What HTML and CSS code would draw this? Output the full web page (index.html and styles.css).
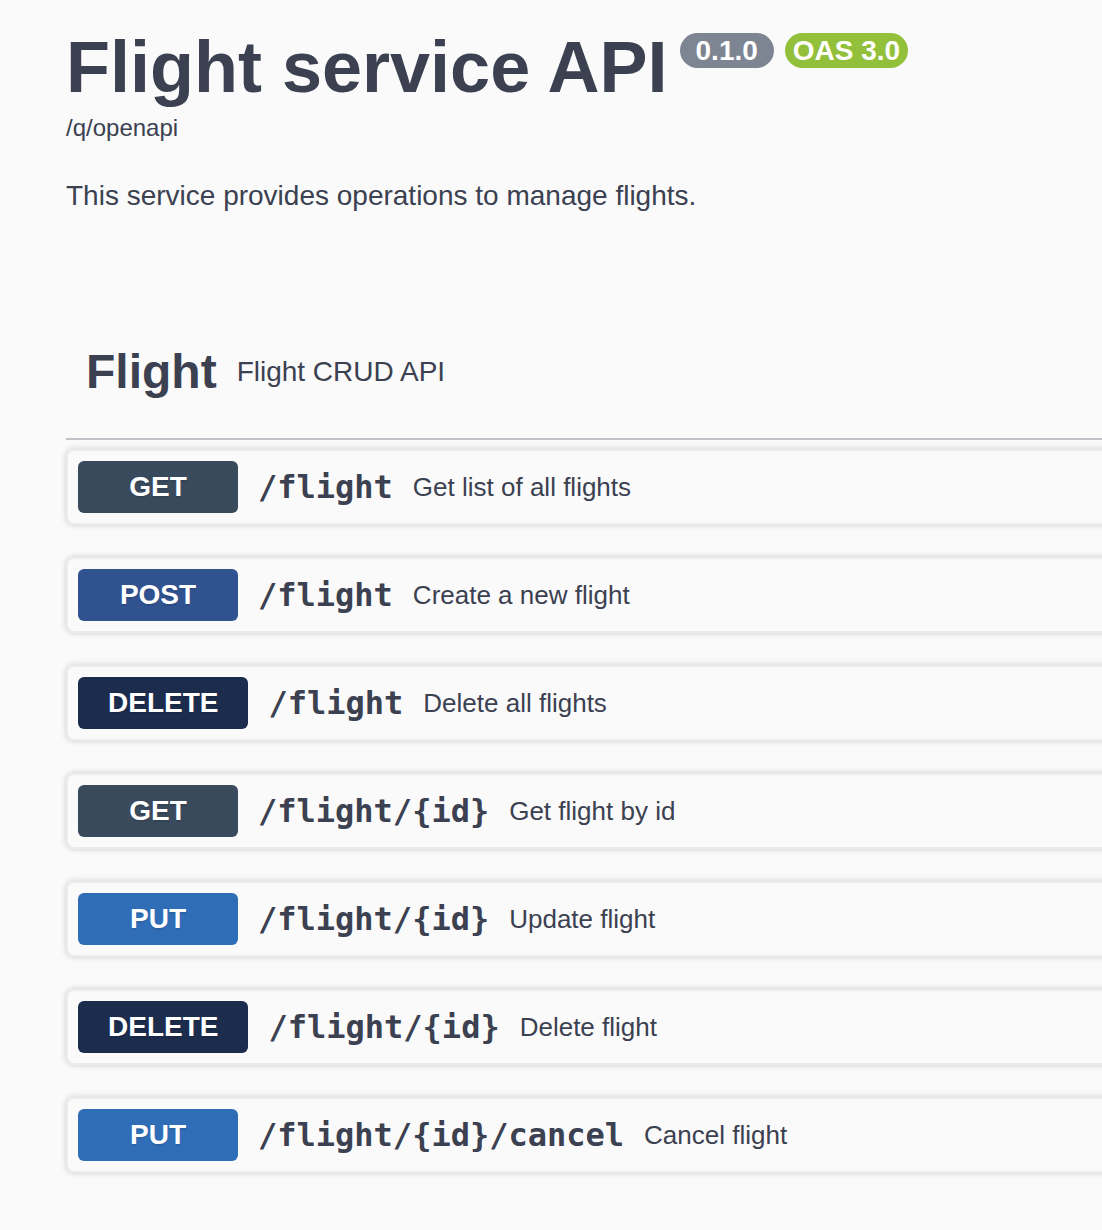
FILE: index.html
```html
<!DOCTYPE html>
<html lang="en">
<head>
<meta charset="utf-8">
<title>Flight service API</title>
<link rel="stylesheet" href="styles.css">
</head>
<body>
<div class="wrapper">
  <section class="info">
    <h2 class="title"><span class="title-text">Flight service API</span><span class="pill pill-version">0.1.0</span><span class="pill pill-oas">OAS 3.0</span></h2>
    <div class="base-url">/q/openapi</div>
    <p class="description">This service provides operations to manage flights.</p>
  </section>

  <section class="tag-section">
    <h3 class="tag"><span class="tag-name">Flight</span><small class="tag-desc">Flight CRUD API</small></h3>

    <div class="opblock">
      <span class="method get">GET</span>
      <span class="path">/flight</span>
      <span class="summary">Get list of all flights</span>
    </div>
    <div class="opblock">
      <span class="method post">POST</span>
      <span class="path">/flight</span>
      <span class="summary">Create a new flight</span>
    </div>
    <div class="opblock">
      <span class="method delete">DELETE</span>
      <span class="path">/flight</span>
      <span class="summary">Delete all flights</span>
    </div>
    <div class="opblock">
      <span class="method get">GET</span>
      <span class="path">/flight/{id}</span>
      <span class="summary">Get flight by id</span>
    </div>
    <div class="opblock">
      <span class="method put">PUT</span>
      <span class="path">/flight/{id}</span>
      <span class="summary">Update flight</span>
    </div>
    <div class="opblock">
      <span class="method delete">DELETE</span>
      <span class="path">/flight/{id}</span>
      <span class="summary">Delete flight</span>
    </div>
    <div class="opblock">
      <span class="method put">PUT</span>
      <span class="path">/flight/{id}/cancel</span>
      <span class="summary">Cancel flight</span>
    </div>
  </section>
</div>
</body>
</html>
```

FILE: styles.css
```css
html, body {
  margin: 0;
  padding: 0;
  overflow: hidden;
  background: #fafafa;
}

body {
  font-family: "Liberation Sans", Arial, sans-serif;
  color: #3b4151;
}

.wrapper {
  width: 1400px;
  padding: 0 0 0 66px;
}

.info {
  padding-top: 27px;
}

.title {
  display: flex;
  align-items: flex-start;
  margin: 0;
  font-size: 72px;
  line-height: 80px;
  font-weight: 700;
  color: #3b4151;
}

.pill {
  display: inline-block;
  margin-top: 6px;
  font-size: 28px;
  line-height: 29px;
  padding: 3px 16px;
  border-radius: 40px;
  color: #fff;
  font-weight: 700;
}

.pill-version {
  margin-left: 12px;
  background: #7d8492;
}

.pill-oas {
  margin-left: 11px;
  padding: 3px 8px;
  background: #93c03a;
}

.base-url {
  margin-top: 7px;
  font-size: 24px;
  line-height: 28px;
}

.description {
  margin: 34px 0 0;
  font-size: 28px;
  line-height: 40px;
}

.tag-section {
  margin-top: 128px;
}

.tag {
  display: flex;
  align-items: center;
  margin: 0 0 9px;
  padding: 0 40px 38px 20px;
  border-bottom: 2px solid #c2c3c8;
  font-weight: 700;
}

.tag-name {
  font-size: 48px;
  line-height: 56px;
  color: #3b4151;
}

.tag-desc {
  padding: 0 20px;
  font-size: 28px;
  line-height: 32px;
  font-weight: 400;
  color: #3b4151;
}

.opblock {
  display: flex;
  align-items: center;
  margin: 0 0 32px;
  padding: 10px;
  border: 2px solid #ececec;
  border-radius: 8px;
  background: #fafafa;
  box-shadow: 0 0 6px rgba(0, 0, 0, 0.19);
}

.method {
  min-width: 160px;
  box-sizing: border-box;
  padding: 12px 30px;
  font-size: 28px;
  line-height: 28px;
  font-weight: 700;
  text-align: center;
  color: #fff;
  border-radius: 6px;
  text-shadow: 0 2px 0 rgba(0, 0, 0, 0.1);
}

.method.get { background: #394a5c; }
.method.post { background: #30528f; }
.method.delete { background: #1b2c4d; }
.method.put { background: #2f6db6; }

.path {
  padding: 0 20px;
  font-family: "DejaVu Sans Mono", "Liberation Mono", monospace;
  font-size: 32px;
  font-weight: 700;
  color: #3b4151;
}

.summary {
  font-size: 26px;
  color: #3b4151;
}
```
